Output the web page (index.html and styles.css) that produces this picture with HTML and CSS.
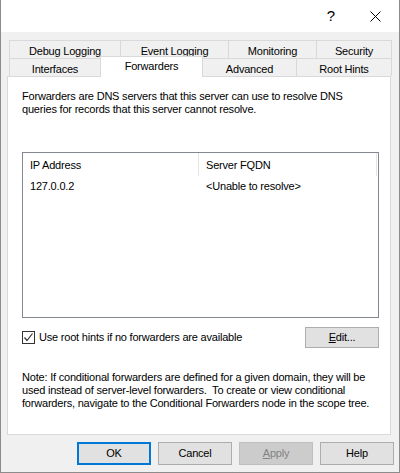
FILE: index.html
```html
<!DOCTYPE html>
<html>
<head>
<meta charset="utf-8">
<link rel="stylesheet" href="styles.css">
</head>
<body>
<div class="window">
  <div class="titlebar">
    <span class="help-glyph">?</span>
    <span class="close-btn">
      <svg width="11" height="11" viewBox="0 0 11 11"><path d="M0.5 0.5 L10.5 10.5 M10.5 0.5 L0.5 10.5" stroke="#000" stroke-width="1" fill="none"/></svg>
    </span>
  </div>
  <div class="tabstrip">
    <div class="tabrow row1">
      <div class="tab">Debug Logging</div>
      <div class="tab">Event Logging</div>
      <div class="tab">Monitoring</div>
      <div class="tab">Security</div>
    </div>
    <div class="tabrow row2">
      <div class="tab">Interfaces</div>
      <div class="tab selected">Forwarders</div>
      <div class="tab">Advanced</div>
      <div class="tab">Root Hints</div>
    </div>
  </div>
  <div class="panel">
    <p class="intro">Forwarders are DNS servers that this server can use to resolve DNS<br>queries for records that this server cannot resolve.</p>
    <div class="listbox">
      <div class="lv-header">
        <div class="lv-col col-ip">IP Address</div>
        <div class="lv-col col-fqdn">Server FQDN</div>
      </div>
      <div class="lv-row">
        <div class="lv-cell col-ip">127.0.0.2</div>
        <div class="lv-cell col-fqdn">&lt;Unable to resolve&gt;</div>
      </div>
    </div>
    <div class="options">
      <label class="check">
        <span class="box">
          <svg width="11" height="11" viewBox="0 0 11 11"><path d="M1.5 5.5 L4 8.5 L9.5 1.5" stroke="#333" stroke-width="1.2" fill="none"/></svg>
        </span>
        <span>Use root hints if no forwarders are available</span>
      </label>
      <button class="btn edit"><u>E</u>dit...</button>
    </div>
    <p class="note">Note: If conditional forwarders are defined for a given domain, they will be<br>used instead of server-level forwarders.&nbsp; To create or view conditional<br>forwarders, navigate to the Conditional Forwarders node in the scope tree.</p>
  </div>
  <div class="buttons">
    <button class="btn default">OK</button>
    <button class="btn">Cancel</button>
    <button class="btn disabled"><u>A</u>pply</button>
    <button class="btn">Help</button>
  </div>
</div>
</body>
</html>
```

FILE: styles.css
```css
html, body {
  margin: 0;
  padding: 0;
}
body {
  width: 400px;
  height: 473px;
  background: #f0f0f0;
  font-family: "Liberation Sans", Arial, sans-serif;
  font-size: 11px;
  line-height: 13px;
  letter-spacing: -0.2px;
  color: #000;
  overflow: hidden;
}
.window {
  width: 400px;
  height: 473px;
  box-sizing: border-box;
  border: 1px solid #8c8c8c;
  border-top: none;
  background: #f0f0f0;
  display: flex;
  flex-direction: column;
}
.titlebar {
  height: 32px;
  background: #fff;
  display: flex;
  align-items: center;
  justify-content: flex-end;
}
.help-glyph {
  font-size: 15px;
  line-height: 16px;
  letter-spacing: 0;
  width: 46px;
  text-align: center;
  margin-right: -2px;
  margin-top: -1px;
}
.close-btn {
  width: 46px;
  height: 32px;
  display: flex;
  align-items: center;
  justify-content: center;
  margin-right: 1px;
}
.tabstrip {
  margin: 8px 0 0 8px;
  width: 380px;
}
.tabrow {
  display: grid;
  height: 18px;
}
.row1 {
  grid-template-columns: 112px 108px 88px 75px;
}
.row2 {
  grid-template-columns: 92px 102px 94px 95px;
}
.tab {
  border: 1px solid #d9d9d9;
  border-bottom: none;
  background: #f0f0f0;
  text-align: center;
  padding-top: 4px;
  box-sizing: border-box;
  height: 18px;
  white-space: nowrap;
}
.tab + .tab {
  margin-left: -1px;
}
.tab.selected {
  background: #fff;
  position: relative;
  z-index: 1;
  margin-top: -2px;
  height: 21px;
  padding-top: 3px;
}
.panel {
  margin-left: 6px;
  width: 384px;
  height: 359px;
  box-sizing: border-box;
  border: 1px solid #d9d9d9;
  background: #fff;
  padding: 13px 11px 0 14px;
}
.intro,
.note {
  white-space: nowrap;
}
.intro {
  margin: 0;
}
.listbox {
  margin-top: 36px;
  width: 357px;
  height: 166px;
  box-sizing: border-box;
  border: 1px solid #828790;
  background: #fff;
}
.lv-header {
  display: flex;
  height: 23px;
}
.lv-col {
  box-sizing: border-box;
  padding: 6px 0 0 7px;
  border-right: 1px solid #e5e5e5;
}
.col-ip {
  width: 176px;
}
.col-fqdn {
  width: 178px;
}
.lv-row {
  display: flex;
  height: 18px;
}
.lv-cell {
  box-sizing: border-box;
  padding: 4px 0 0 7px;
}
.options {
  margin-top: 9px;
  width: 357px;
  display: flex;
  align-items: center;
  justify-content: space-between;
  height: 21px;
}
.check {
  display: flex;
  align-items: center;
  gap: 4px;
}
.box {
  width: 13px;
  height: 13px;
  box-sizing: border-box;
  border: 1px solid #333;
  background: #fff;
  display: flex;
  align-items: center;
  justify-content: center;
}
.btn {
  font-family: "Liberation Sans", Arial, sans-serif;
  font-size: 11px;
  line-height: 13px;
  letter-spacing: -0.2px;
  color: #000;
  background: #e1e1e1;
  border: 1px solid #adadad;
  padding: 0;
  margin: 0;
  box-sizing: border-box;
  border-radius: 0;
}
.btn u {
  text-decoration: underline;
}
.edit {
  width: 74px;
  height: 21px;
}
.note {
  margin: 23px 0 0 0;
}
.buttons {
  display: flex;
  gap: 7px;
  margin: 7px 0 0 76px;
}
.buttons .btn {
  width: 74px;
  height: 23px;
}
.btn.default {
  border: 2px solid #0078d7;
}
.btn.disabled {
  background: #cccccc;
  border-color: #bfbfbf;
  color: #838383;
}
```
